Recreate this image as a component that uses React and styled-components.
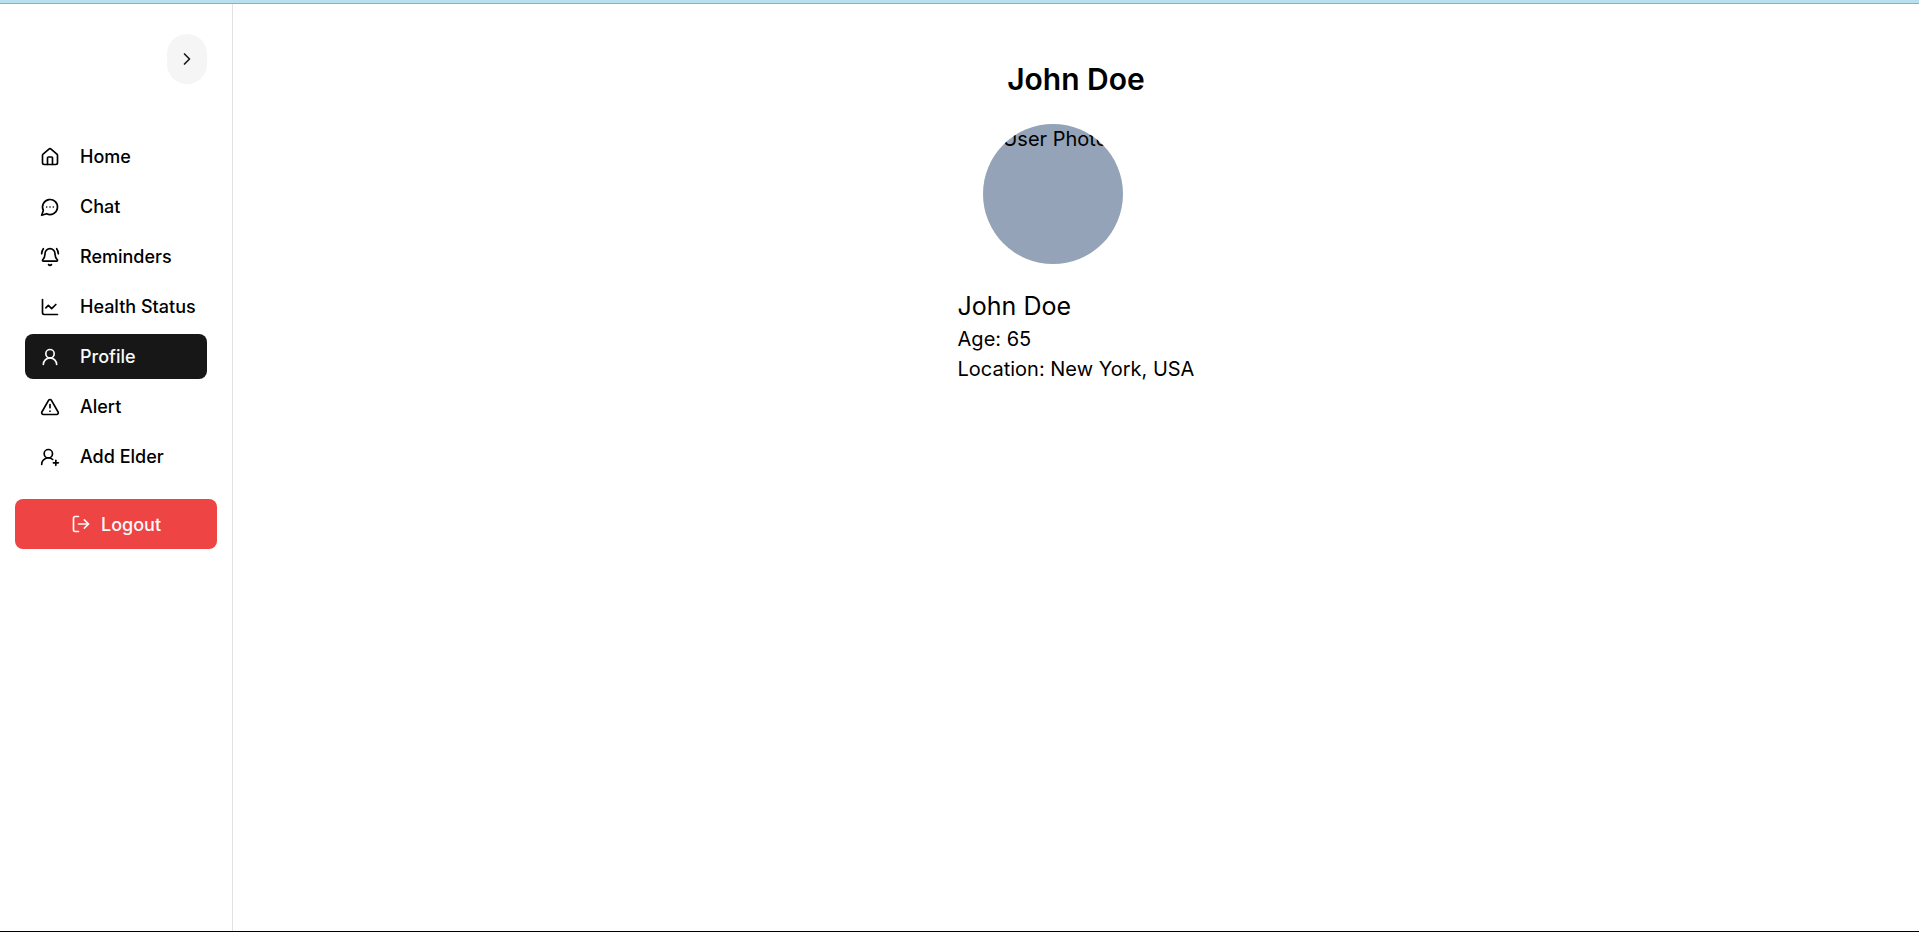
import React from "react";
import styled, { createGlobalStyle } from "styled-components";
import {
  BellRing,
  ChartLine,
  ChevronRight,
  House,
  LogOut,
  TriangleAlert,
  UserRound,
  UserRoundPlus,
} from "lucide-react";

const GlobalStyle = createGlobalStyle`
  *, *::before, *::after { box-sizing: border-box; }
  body {
    margin: 0;
    background: #ffffff;
    color: #000000;
    font-family: Inter, "Liberation Sans", sans-serif;
    font-size: 20px;
    line-height: 30px;
  }
  h1, h2, p { margin: 0; }
`;

const Page = styled.div`
  display: flex;
  flex-direction: column;
  min-height: 100vh;
  border-bottom: 1px solid #000000;
`;

const TopBar = styled.header`
  height: 4px;
  background: #b8e0ec;
  border-bottom: 1px solid #8ab4bc;
`;

const Body = styled.div`
  display: flex;
  flex: 1;
`;

const Sidebar = styled.aside`
  display: flex;
  flex-direction: column;
  flex-shrink: 0;
  width: 233px;
  padding: 30px 15px;
  border-right: 1px solid #e2e2e2;
`;

const ToggleButton = styled.button`
  display: flex;
  align-items: center;
  justify-content: center;
  align-self: flex-end;
  width: 40px;
  height: 50px;
  margin-right: 10px;
  padding: 0;
  border: 0;
  border-radius: 20px;
  background: #f5f5f5;
  color: #171717;
  cursor: pointer;
`;

const Nav = styled.nav`
  display: flex;
  flex-direction: column;
  gap: 5px;
  margin: 50px 10px 20px;
`;

const NavLink = styled.a`
  display: flex;
  align-items: center;
  gap: 20px;
  height: 45px;
  padding: 0 15px;
  border-radius: 8px;
  background: ${(p) => (p.$active ? "#171717" : "transparent")};
  color: ${(p) => (p.$active ? "#fafafa" : "#000000")};
  font-size: 18px;
  font-weight: 500;
  line-height: 25px;
  text-decoration: none;
  white-space: nowrap;

  svg { flex-shrink: 0; }
`;

const LogoutButton = styled.button`
  display: flex;
  align-items: center;
  justify-content: center;
  gap: 10px;
  height: 50px;
  border: 0;
  border-radius: 8px;
  background: #ef4444;
  color: #fafafa;
  font-family: inherit;
  font-size: 18px;
  font-weight: 500;
  line-height: 25px;
  cursor: pointer;
`;

const Main = styled.main`
  display: flex;
  flex: 1;
  flex-direction: column;
  align-items: center;
  padding: 55px 20px;
`;

const Title = styled.h1`
  margin-bottom: 25px;
  font-size: 30px;
  font-weight: 600;
  line-height: 40px;
`;

const ProfileCard = styled.section`
  display: flex;
  flex-direction: column;
`;

const Avatar = styled.div`
  width: 140px;
  height: 140px;
  margin: 0 25px 25px;
  padding-left: 5px;
  border-radius: 50%;
  overflow: hidden;
  background: #94a3b8;
  text-align: center;
`;

const Name = styled.h2`
  font-size: 25px;
  font-weight: 400;
  line-height: 35px;
`;

/* Speech bubble with a pointed tail at the lower left and three dots. */
function ChatBubble({ size }) {
  return (
    <svg
      width={size}
      height={size}
      viewBox="0 0 24 24"
      fill="none"
      stroke="currentColor"
      strokeWidth="2"
      strokeLinecap="round"
      strokeLinejoin="round"
      aria-hidden="true"
    >
      <path d="M7.9 20A9 9 0 1 0 4 16.1L2 22Z" />
      <path d="M8 12h.01" />
      <path d="M12 12h.01" />
      <path d="M16 12h.01" />
    </svg>
  );
}

const links = [
  { label: "Home", Icon: House },
  { label: "Chat", Icon: ChatBubble },
  { label: "Reminders", Icon: BellRing },
  { label: "Health Status", Icon: ChartLine },
  { label: "Profile", Icon: UserRound, active: true },
  { label: "Alert", Icon: TriangleAlert },
  { label: "Add Elder", Icon: UserRoundPlus },
];

export default function App() {
  return (
    <>
      <GlobalStyle />
      <Page>
        <TopBar />
        <Body>
          <Sidebar>
            <ToggleButton type="button" aria-label="Toggle sidebar">
              <ChevronRight size={20} />
            </ToggleButton>
            <Nav>
              {links.map(({ label, Icon, active }) => (
                <NavLink
                  key={label}
                  href="#"
                  $active={active}
                  aria-current={active ? "page" : undefined}
                >
                  <Icon size={20} />
                  {label}
                </NavLink>
              ))}
            </Nav>
            <LogoutButton type="button">
              <LogOut size={20} />
              Logout
            </LogoutButton>
          </Sidebar>
          <Main>
            <Title>John Doe</Title>
            <ProfileCard>
              <Avatar>User Photo</Avatar>
              <Name>John Doe</Name>
              <p>Age: 65</p>
              <p>Location: New York, USA</p>
            </ProfileCard>
          </Main>
        </Body>
      </Page>
    </>
  );
}
